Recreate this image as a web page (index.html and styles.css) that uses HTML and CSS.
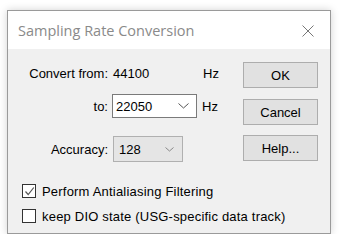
FILE: index.html
```html
<!DOCTYPE html>
<html lang="en">
<head>
    <meta charset="UTF-8">
    <title>Sampling Rate Conversion</title>
    <link rel="stylesheet" href="styles.css">
</head>
<body>
    <div class="dialog">
        <div class="titlebar">
            <span class="title">Sampling Rate Conversion</span>
            <svg class="close" width="12" height="12" viewBox="0 0 12 12">
                <path d="M0.5 0.5 L11.5 11.5 M11.5 0.5 L0.5 11.5" stroke="#777" stroke-width="1" fill="none"/>
            </svg>
        </div>
        <div class="content">
            <div class="top">
                <div class="fields">
                    <div class="row row-from">
                        <span class="label">Convert from:</span>
                        <span class="value">44100</span>
                        <span class="unit">Hz</span>
                    </div>
                    <div class="row row-to">
                        <span class="label">to:</span>
                        <div class="combo">
                            <span>22050</span>
                            <svg width="11" height="6" viewBox="0 0 11 6"><path d="M0.5 0.5 L5.5 5 L10.5 0.5" stroke="#555" fill="none"/></svg>
                        </div>
                        <span class="unit">Hz</span>
                    </div>
                    <div class="row row-acc">
                        <span class="label">Accuracy:</span>
                        <div class="combo combo-gray">
                            <span>128</span>
                            <svg width="9" height="5" viewBox="0 0 9 5"><path d="M0.5 0.5 L4.5 4 L8.5 0.5" stroke="#888" fill="none"/></svg>
                        </div>
                    </div>
                </div>
                <div class="buttons">
                    <button class="btn btn-ok">OK</button>
                    <button class="btn btn-cancel">Cancel</button>
                    <button class="btn btn-help">Help...</button>
                </div>
            </div>
            <label class="check check-first">
                <span class="box"><svg width="11" height="11" viewBox="0 0 11 11"><path d="M1.5 5.5 L4.2 8.5 L9.8 1.5" stroke="#555" stroke-width="1.2" fill="none"/></svg></span>
                Perform Antialiasing Filtering
            </label>
            <label class="check">
                <span class="box"></span>
                keep DIO state (USG-specific data track)
            </label>
        </div>
    </div>
</body>
</html>
```

FILE: styles.css
```css
body { margin: 0; background: #fff; font-family: "Liberation Sans", Arial, sans-serif; font-size: 13px; color: #000; }
.dialog { margin: 10px 0 0 7px; width: 322px; height: 222px; border: 1px solid #9a9a9a; background: #f0f0f0; box-shadow: 0 0 8px rgba(0,0,0,0.18); display: flex; flex-direction: column; }
.titlebar { height: 38px; background: #fff; display: flex; align-items: center; padding: 0 16px 0 10px; }
.title { font-family: "Open Sans", sans-serif; font-size: 14.5px; color: #8a8a8a; flex: 1; }
.close { margin-top: 1px; }
.content { flex: 1; }
.top { display: flex; }
.fields { padding-top: 12px; }
.row { display: flex; align-items: center; }
.label { width: 100px; text-align: right; margin-right: 4px; }
.row-from { height: 25px; }
.row-from .value { width: 85px; padding-left: 1px; }
.row-to { height: 24px; margin-top: 8px; }
.row-acc { height: 26px; margin-top: 18px; }
.unit { margin-left: 5px; }
.combo { box-sizing: border-box; height: 100%; width: 85px; border: 1px solid #7a7a7a; background: #fff; display: flex; align-items: center; justify-content: space-between; padding: 0 7px 0 3px; }
.combo-gray { width: 70px; background: #e5e5e5; border-color: #b0b0b0; padding: 0 8px 0 5px; margin-left: 1px; }
.buttons { margin-left: auto; margin-right: 12px; padding-top: 13px; display: flex; flex-direction: column; }
.btn { width: 75px; height: 26px; background: #e1e1e1; border: 1px solid #adadad; font-family: "Liberation Sans", Arial, sans-serif; font-size: 13px; color: #000; padding: 0; }
.btn-cancel { margin-top: 11px; }
.btn-help { margin-top: 10px; }
.check { display: flex; align-items: center; height: 20px; padding-left: 14px; letter-spacing: 0.2px; }
.check-first { margin-top: 19px; }
.check + .check { margin-top: 5px; }
.box { box-sizing: border-box; width: 14px; height: 14px; border: 1px solid #333; background: #fff; margin-right: 6px; display: flex; align-items: center; justify-content: center; }
```
